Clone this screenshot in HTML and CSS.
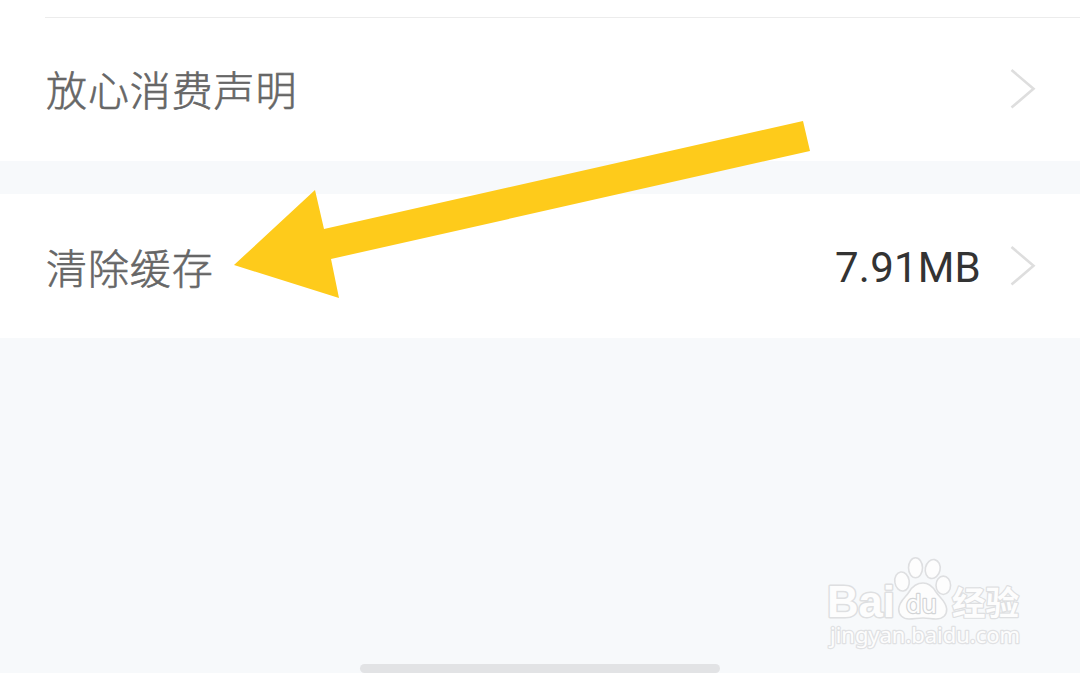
FILE: index.html
```html
<!DOCTYPE html>
<html lang="zh-CN">
<head>
    <meta charset="UTF-8">
    <meta name="viewport" content="width=device-width, initial-scale=1.0">
    <title>设置</title>
    <link rel="stylesheet" href="styles.css">
</head>
<body>
    <main class="settings">
        <div class="group group-first">
            <div class="row">
                <span class="label">放心消费声明</span>
                <svg class="chevron" viewBox="0 0 26 40"><path d="M1.5 1 L23.5 19.8 L1.5 38.5"/></svg>
            </div>
        </div>
        <div class="group">
            <div class="row">
                <span class="label">清除缓存</span>
                <span class="value">7.91MB</span>
                <svg class="chevron" viewBox="0 0 26 40"><path d="M1.5 1 L23.5 19.8 L1.5 38.5"/></svg>
            </div>
        </div>
        <div class="home-bar"></div>
    </main>

    <!-- pointer arrow over the rows -->
    <svg class="arrow" viewBox="0 0 580 180">
        <polygon points="1,145 82,70 91,109 570,1 577,31 98,139 106,178"/>
    </svg>

    <svg class="watermark" viewBox="0 0 210 105">
        <g class="mark">
            <text class="brand" x="7" y="67" textLength="68" lengthAdjust="spacingAndGlyphs">Bai</text>
            <ellipse cx="82" cy="31.5" rx="7.2" ry="9.6" transform="rotate(-8 82 31.5)"/>
            <ellipse cx="95.5" cy="17.8" rx="7" ry="10"/>
            <ellipse cx="112.7" cy="19" rx="7.4" ry="9.6" transform="rotate(12 112.7 19)"/>
            <ellipse cx="123.3" cy="35.3" rx="7.3" ry="9.2"/>
            <path d="M103 33 C96 33 92 37 89 42 C86 47 79 51 78.7 59 C78.5 65 83 69 89 69 C94 69 98 68 103 68 C108 68 111 69 116 69 C123 69 127 65 126.7 59 C126 51 120 48 116 42 C113 37 109 33 103 33 Z"/>
            <text class="du" x="86" y="63" textLength="31" lengthAdjust="spacingAndGlyphs">du</text>
            <text class="cjk" x="132" y="64.5" textLength="67" lengthAdjust="spacingAndGlyphs">经验</text>
            <text class="site" x="10" y="93" textLength="190" lengthAdjust="spacingAndGlyphs">jingyan.baidu.com</text>
        </g>
    </svg>
</body>
</html>
```
FILE: styles.css
```css
* {
    box-sizing: border-box;
}
body {
    margin: 0;
    background: #f7f9fb;
    font-family: Roboto, "Noto Sans CJK SC", sans-serif;
}
.settings {
    display: flex;
    flex-direction: column;
    height: 673px;
    overflow: hidden;
}
.group {
    background: #fff;
    padding-left: 45px;
    margin-bottom: 33px;
}
.group-first {
    padding-top: 17px;
}
.row {
    display: flex;
    align-items: center;
    height: 144px;
    padding-right: 44px;
}
.group-first .row {
    border-top: 1px solid #ececec;
    padding-bottom: 2px;
}
.label {
    flex: 1;
    padding-left: 1px;
    margin-bottom: 1px;
    font-family: "Noto Sans CJK SC", sans-serif;
    font-size: 41px;
    font-weight: 300;
    letter-spacing: 0.9px;
    line-height: 60px;
    color: #666;
    -webkit-text-stroke: 0.6px #666;
}
.value {
    font-size: 42px;
    font-weight: 400;
    font-kerning: none;
    letter-spacing: 0.2px;
    line-height: 50px;
    color: #333;
    margin: 3px 29px 0 0;
}
.chevron {
    width: 26px;
    height: 40px;
    fill: none;
    stroke: #dedede;
    stroke-width: 2.6;
}
.home-bar {
    width: 360px;
    height: 9px;
    margin: auto auto 0;
    border-radius: 5px;
    background: #e2e3e5;
}
.arrow {
    position: absolute;
    left: 233px;
    top: 120px;
    width: 580px;
    height: 180px;
    fill: #fecb1b;
}
.watermark {
    position: absolute;
    left: 820px;
    top: 550px;
    width: 210px;
    height: 105px;
}
.mark {
    fill: #fdfdfd;
    stroke: #dedfe1;
    stroke-width: 1.6;
}
.mark text {
    paint-order: stroke;
    stroke-width: 2.4;
    stroke-linejoin: round;
}
.mark .brand {
    font: bold 44px "Liberation Sans", sans-serif;
    stroke-width: 3;
}
.mark .du {
    font: 25px "DejaVu Sans", sans-serif;
    stroke: #d2d4d6;
}
.mark .cjk {
    font: bold 33px "Noto Sans CJK SC", sans-serif;
}
.mark .site {
    font: 21px "Noto Sans", sans-serif;
    stroke: #e0e1e3;
}
```
